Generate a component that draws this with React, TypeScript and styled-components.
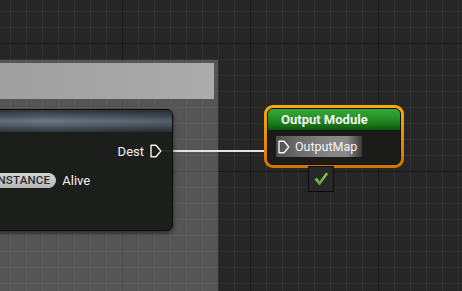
import React, { FC } from 'react'
import styled, { createGlobalStyle, css } from 'styled-components'

const GlobalStyle = createGlobalStyle`
  html, body {
    margin: 0;
    padding: 0;
    background: #262626;
  }
  body {
    font-family: Roboto, 'Liberation Sans', sans-serif;
  }
`

// graph canvas with minor (16px) and major (128px) grid lines
const Canvas = styled.div(
  () => css`
    position: relative;
    width: 462px;
    height: 291px;
    overflow: hidden;
    background-color: #262626;
    background-image: linear-gradient(
        to right,
        transparent 122px,
        #1a1a1a 122px,
        #1a1a1a 123px,
        transparent 123px
      ),
      linear-gradient(
        to bottom,
        transparent 43px,
        #1a1a1a 43px,
        #1a1a1a 44px,
        transparent 44px
      ),
      linear-gradient(
        to right,
        transparent 10px,
        #313131 10px,
        #313131 11px,
        transparent 11px
      ),
      linear-gradient(
        to bottom,
        transparent 11px,
        #313131 11px,
        #313131 12px,
        transparent 12px
      );
    background-size: 128px 100%, 100% 128px, 16px 100%, 100% 16px;
  `,
)

const CommentBox = styled.div(
  () => css`
    position: absolute;
    left: -10px;
    top: 60px;
    width: 228px;
    height: 260px;
    box-sizing: border-box;
    padding: 3px 4px 0 0;
    background: rgba(255, 255, 255, 0.22);
  `,
)

const CommentHeader = styled.div(
  () => css`
    height: 36px;
    background: linear-gradient(to right, #9e9e9e, #acacac);
  `,
)

const Wires = styled.svg(
  () => css`
    position: absolute;
    left: 0;
    top: 0;
    width: 462px;
    height: 291px;
    pointer-events: none;
  `,
)

const Node = styled.div<{ $x: number; $y: number; $w: number; $h: number }>(
  (p) => css`
    position: absolute;
    left: ${p.$x}px;
    top: ${p.$y}px;
    width: ${p.$w}px;
    height: ${p.$h}px;
    box-sizing: border-box;
    border-radius: 6px;
    overflow: hidden;
    background: rgba(24, 26, 24, 0.92);
    border: 1px solid #0c0c0c;
    box-shadow: 0 2px 5px rgba(0, 0, 0, 0.55);
    color: #f2f2f2;
  `,
)

const SlateHeader = styled.div(
  () => css`
    height: 22px;
    background: linear-gradient(
        to right,
        rgba(0, 0, 0, 0.25),
        rgba(0, 0, 0, 0) 50%,
        rgba(0, 0, 0, 0.2)
      ),
      linear-gradient(
        to bottom,
        #30363d 0%,
        #4f5a66 30%,
        #6c7886 50%,
        #505a65 75%,
        #2f353b 100%
      );
  `,
)

const Body = styled.div(
  () => css`
    display: flex;
    flex-direction: column;
    gap: 9px;
    padding-top: 9px;
  `,
)

const Row = styled.div<{ $align?: 'start' | 'end' }>(
  (p) => css`
    display: flex;
    align-items: center;
    gap: 6px;
    height: 20px;
    font-size: 13px;
    justify-content: ${p.$align === 'end' ? 'flex-end' : 'flex-start'};
    padding: ${p.$align === 'end' ? '0 10px 0 0' : '0 0 0 69px'};
  `,
)

const Pill = styled.span(
  () => css`
    display: inline-flex;
    align-items: center;
    height: 15px;
    padding: 0 6px 0 4px;
    border-radius: 8px;
    background: linear-gradient(to bottom, #d2d2d2, #b8b8b8);
    color: #2c2c2c;
    font-size: 11.5px;
    font-weight: 500;
    letter-spacing: 0.2px;
  `,
)

const Selection = styled.div(
  () => css`
    position: absolute;
    left: 264px;
    top: 105px;
    width: 140px;
    height: 63px;
    box-sizing: border-box;
    padding: 3px;
    border-radius: 9px;
    background: linear-gradient(to bottom, #f7ab0a, #d27400);
  `,
)

const ModuleNode = styled.div(
  () => css`
    height: 100%;
    box-sizing: border-box;
    border-radius: 6px;
    overflow: hidden;
    border: 1px solid #101010;
    background: #1b1c1a;
    color: #f2f2f2;
  `,
)

const GreenHeader = styled.div(
  () => css`
    height: 21px;
    display: flex;
    align-items: center;
    padding-left: 13px;
    font-size: 13px;
    font-weight: 700;
    background: linear-gradient(
      to bottom,
      #38a838 0%,
      #249024 45%,
      #167016 80%,
      #0f5510 100%
    );
  `,
)

const ModuleBody = styled.div(
  () => css`
    padding: 6px 0 0 8px;
  `,
)

const PinRow = styled.div(
  () => css`
    display: flex;
    align-items: center;
    gap: 5px;
    width: 86px;
    height: 21px;
    padding-left: 2px;
    box-sizing: border-box;
    font-size: 12.5px;
    color: #f4f4f4;
    background: linear-gradient(
      to right,
      #4e4e4e 0%,
      #6a6a6a 25%,
      #858585 60%,
      #8a8a8a 82%,
      #3a3a3a 100%
    );
  `,
)

const CheckBox = styled.div(
  () => css`
    position: absolute;
    left: 308px;
    top: 166px;
    width: 26px;
    height: 26px;
    box-sizing: border-box;
    border: 1px solid #0c0c0c;
    background: #282828;
    display: flex;
    align-items: center;
    justify-content: center;
  `,
)

const PinIcon: FC = () => (
  <svg width="12" height="14" viewBox="0 0 12 14">
    <path
      d="M1 1.2 H6 L10.8 7 L6 12.8 H1 Z"
      fill="none"
      stroke="#f4f4f4"
      strokeWidth="1.4"
      strokeLinejoin="round"
    />
  </svg>
)

const CheckIcon: FC = () => (
  <svg width="16" height="16" viewBox="0 0 16 16">
    <defs>
      <linearGradient id="chk" x1="0" y1="0" x2="0" y2="1">
        <stop offset="0" stopColor="#9ad655" />
        <stop offset="1" stopColor="#5e9e2c" />
      </linearGradient>
    </defs>
    <path
      d="M1.5 8.5 L4 6.8 L6.5 10.2 L13.2 1.5 L15 3 L6.6 14.5 Z"
      fill="url(#chk)"
    />
  </svg>
)

export default function App() {
  return (
    <>
      <GlobalStyle />
      <Canvas>
        <CommentBox>
          <CommentHeader />
        </CommentBox>

        <Wires viewBox="0 0 462 291">
          <line x1="162" y1="151" x2="282" y2="151" stroke="#e2e2e2" strokeWidth="2" />
        </Wires>

        <Node $x={-80} $y={109} $w={253} $h={122}>
          <SlateHeader />
          <Body>
            <Row $align="end">
              <span>Dest</span>
              <PinIcon />
            </Row>
            <Row>
              <Pill>INSTANCE</Pill>
              <span>Alive</span>
            </Row>
          </Body>
        </Node>

        <Selection>
          <ModuleNode>
            <GreenHeader>Output Module</GreenHeader>
            <ModuleBody>
              <PinRow>
                <PinIcon />
                <span>OutputMap</span>
              </PinRow>
            </ModuleBody>
          </ModuleNode>
        </Selection>

        <CheckBox>
          <CheckIcon />
        </CheckBox>
      </Canvas>
    </>
  )
}
